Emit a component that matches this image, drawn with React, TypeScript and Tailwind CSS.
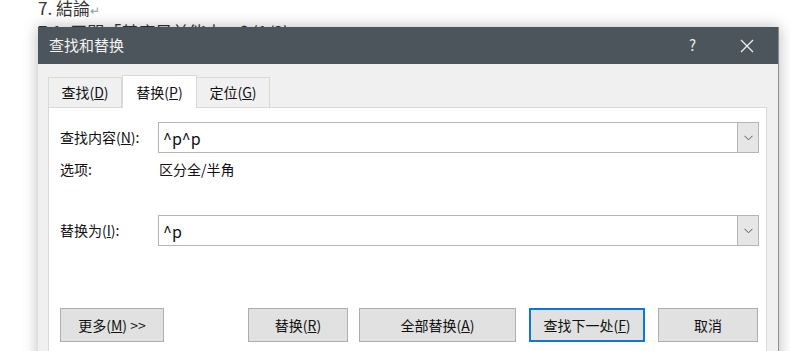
import React from 'react'

const font = "font-['Microsoft_YaHei','Noto_Sans_CJK_SC','Noto_Sans',sans-serif]"

const Chevron = () => (
  <svg width="9" height="6" viewBox="0 0 9 6" className="text-[#555]">
    <path d="M0.5 0.8 L4.5 4.8 L8.5 0.8" fill="none" stroke="currentColor" strokeWidth="1" />
  </svg>
)

const Combo = ({ value }: { value: string }) => (
  <div className="flex h-[31px] w-[601px] items-stretch border border-[#b4b4b4] bg-white">
    <div className="flex flex-1 items-center pl-[4px] text-[16px] text-[#111]">{value}</div>
    <div className="flex w-[21px] items-center justify-center border-l border-[#b4b4b4] bg-[#e6e6e6]">
      <Chevron />
    </div>
  </div>
)

const Btn = ({ children, w, primary }: { children: React.ReactNode; w: string; primary?: boolean }) => (
  <div
    className={`flex h-[34px] items-center justify-center bg-[#e1e1e1] text-[14px] text-[#111] ${w} ${
      primary ? 'border-2 border-[#0a78d7]' : 'border border-[#adadad]'
    }`}
  >
    {children}
  </div>
)

export default function App() {
  return (
    <div className={`relative h-[351px] w-[790px] overflow-hidden bg-white ${font}`}>
      {/* document behind the dialog */}
      <div className="h-[27px] overflow-hidden pl-[38px] text-[17px] leading-[21px] text-[#333]">
        <div className="-mt-[3px]">
          7. 結論<span className="text-[12px] text-[#999]">↵</span>
        </div>
        <div className="mt-[1px]">7.1. 王開「基底目前能力」? (1/2)</div>
      </div>

      {/* dialog window */}
      <div className="absolute left-[38px] top-[27px] w-[741px] border-r border-[#8c8c8c] bg-[#f0f0f0] shadow-[0_0_14px_rgba(0,0,0,0.28)]">
        <div className="flex h-[37px] items-center bg-[#4c555b] pl-[11px] text-[15px] text-[#f2f2f2]">
          <span>查找和替换</span>
          <span className="ml-auto mr-[44px] text-[15px] text-[#e8e8e8]">?</span>
          <svg width="14" height="14" viewBox="0 0 14 14" className="mr-[24px]">
            <path d="M1 1 L13 13 M13 1 L1 13" stroke="#f0f0f0" strokeWidth="1.3" />
          </svg>
        </div>

        <div className="pl-[10px] pr-[11px] pt-[11px]">
          {/* tabs */}
          <div className="flex h-[32px] items-end text-[14px] text-[#111]">
            <div className="flex h-[30px] w-[74px] items-center justify-center border border-b-0 border-[#d9d9d9]">
              查找(<u>D</u>)
            </div>
            <div className="relative z-10 -mb-px flex h-[33px] w-[75px] items-center justify-center border border-b-0 border-[#d9d9d9] bg-white">
              替换(<u>P</u>)
            </div>
            <div className="flex h-[30px] w-[73px] items-center justify-center border border-b-0 border-l-0 border-[#d9d9d9]">
              定位(<u>G</u>)
            </div>
          </div>

          {/* panel */}
          <div className="h-[260px] border border-[#d9d9d9] bg-white pl-[11px] pt-[14px] text-[14px] text-[#111]">
            <div className="flex items-center">
              <div className="w-[98px]">
                查找内容(<u>N</u>):
              </div>
              <Combo value="^p^p" />
            </div>
            <div className="mt-[5px] flex h-[22px] items-center">
              <div className="w-[98px]">选项:</div>
              <div className="pl-[1px]">区分全/半角</div>
            </div>
            <div className="mt-[35px] flex items-center">
              <div className="w-[98px]">
                替换为(<u>I</u>):
              </div>
              <Combo value="^p" />
            </div>

            <div className="mt-[62px] flex items-center">
              <Btn w="w-[104px]">
                更多(<u>M</u>) &gt;&gt;
              </Btn>
              <Btn w="w-[100px] ml-[84px]">
                替换(<u>R</u>)
              </Btn>
              <Btn w="w-[157px] ml-[11px]">
                全部替换(<u>A</u>)
              </Btn>
              <Btn w="w-[116px] ml-[13px]" primary>
                查找下一处(<u>F</u>)
              </Btn>
              <Btn w="w-[100px] ml-[13px]">取消</Btn>
            </div>
          </div>
        </div>
      </div>
    </div>
  )
}
